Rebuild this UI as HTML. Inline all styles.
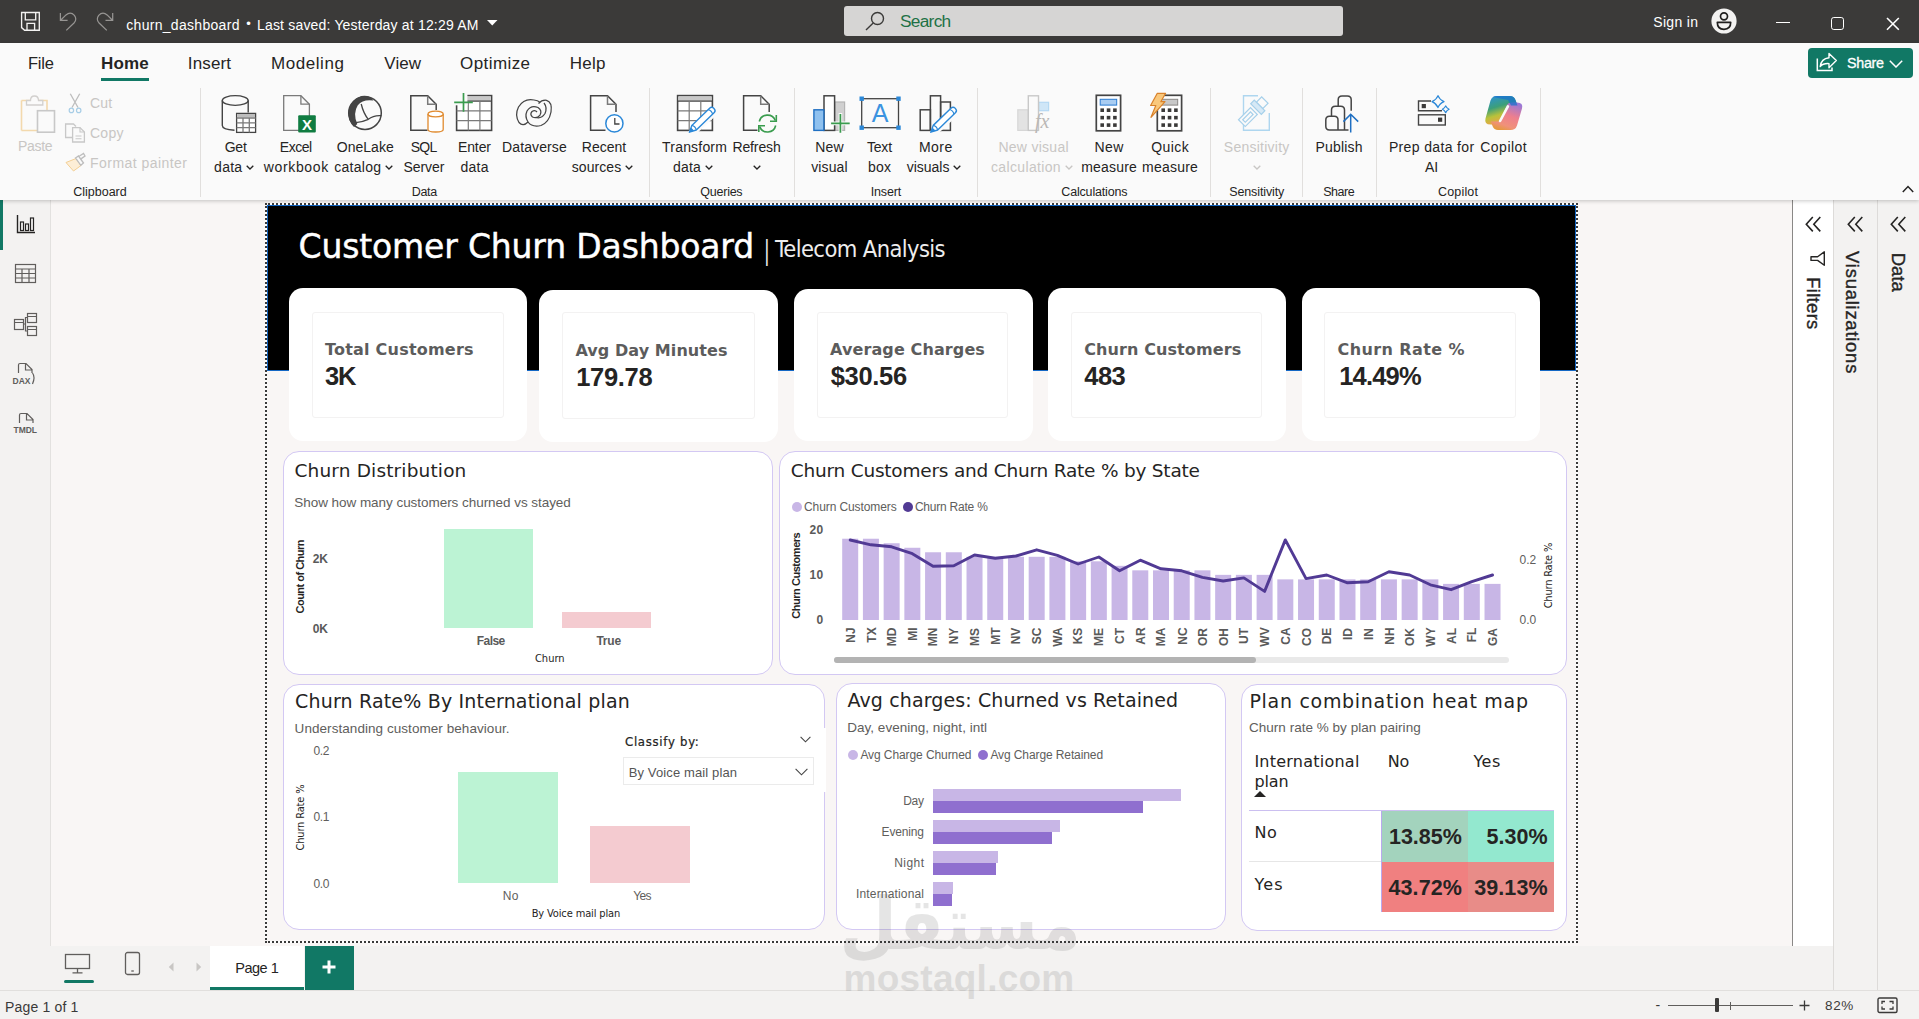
<!DOCTYPE html>
<html lang="en"><head><meta charset="utf-8"><title>churn_dashboard - Power BI Desktop</title>
<style>
html,body{margin:0;padding:0;}
body{width:1919px;height:1019px;overflow:hidden;position:relative;background:#f9f6f5;font-family:"Liberation Sans", sans-serif;}
.a{position:absolute;box-sizing:border-box;}
.t{position:absolute;white-space:pre;line-height:1;}
</style></head><body>
<div class="a" style="left:0px;top:200px;width:1919px;height:790px;background:#f9f6f5;"></div>
<div class="a" style="left:0px;top:200px;width:51px;height:790px;background:#f3f2f1;border-right:1px solid #e3e1df;"></div>
<div class="a" style="left:0px;top:200px;width:3px;height:50px;background:#117865;"></div>
<div class="a" style="left:1792px;top:200px;width:41px;height:746px;background:#ffffff;border-left:1px solid #8a8886;"></div>
<div class="a" style="left:1833px;top:200px;width:86px;height:790px;background:#f3f2f1;border-left:1px solid #dddbd9;"></div>
<div class="a" style="left:1877px;top:200px;width:1px;height:790px;background:#dddbd9;"></div>
<div class="a" style="left:50px;top:946px;width:1783px;height:44px;background:#f3f2f1;"></div>
<div class="a" style="left:0px;top:990px;width:1919px;height:29px;background:#f3f2f1;border-top:1px solid #e1dfdd;"></div>
<div class="a" style="left:0px;top:0px;width:1919px;height:43px;background:#3b3a39;"></div>
<div class="a" style="left:844px;top:6px;width:499px;height:30px;background:#d6d5d4;border-radius:3px;"></div>
<div class="a" style="left:0px;top:43px;width:1919px;height:157px;background:#fafafa;box-shadow:0 1px 4px rgba(0,0,0,.22);"></div>
<div class="a" style="left:101px;top:78px;width:48px;height:3px;background:#117865;"></div>
<div class="a" style="left:1807.5px;top:48px;width:105px;height:30px;background:#117865;border-radius:4px;"></div>
<div class="a" style="left:200px;top:88px;width:1px;height:109px;background:#e1dfdd;"></div>
<div class="a" style="left:649px;top:88px;width:1px;height:109px;background:#e1dfdd;"></div>
<div class="a" style="left:794px;top:88px;width:1px;height:109px;background:#e1dfdd;"></div>
<div class="a" style="left:977px;top:88px;width:1px;height:109px;background:#e1dfdd;"></div>
<div class="a" style="left:1210px;top:88px;width:1px;height:109px;background:#e1dfdd;"></div>
<div class="a" style="left:1302px;top:88px;width:1px;height:109px;background:#e1dfdd;"></div>
<div class="a" style="left:1376px;top:88px;width:1px;height:109px;background:#e1dfdd;"></div>
<div class="a" style="left:1540px;top:88px;width:1px;height:109px;background:#e1dfdd;"></div>
<svg class="a" style="left:246.375px;top:165.2px;" width="8" height="5" viewBox="0 0 8 5" fill="none"><path d="M0.7 0.7 L4 4 L7.3 0.7" stroke="#252423" stroke-width="1.3"/></svg>
<svg class="a" style="left:385.25px;top:165.2px;" width="8" height="5" viewBox="0 0 8 5" fill="none"><path d="M0.7 0.7 L4 4 L7.3 0.7" stroke="#252423" stroke-width="1.3"/></svg>
<svg class="a" style="left:625.25px;top:165.2px;" width="8" height="5" viewBox="0 0 8 5" fill="none"><path d="M0.7 0.7 L4 4 L7.3 0.7" stroke="#252423" stroke-width="1.3"/></svg>
<svg class="a" style="left:705.0px;top:165.2px;" width="8" height="5" viewBox="0 0 8 5" fill="none"><path d="M0.7 0.7 L4 4 L7.3 0.7" stroke="#252423" stroke-width="1.3"/></svg>
<svg class="a" style="left:753.1px;top:165.2px;" width="8" height="5" viewBox="0 0 8 5" fill="none"><path d="M0.7 0.7 L4 4 L7.3 0.7" stroke="#252423" stroke-width="1.3"/></svg>
<svg class="a" style="left:953.35px;top:165.2px;" width="8" height="5" viewBox="0 0 8 5" fill="none"><path d="M0.7 0.7 L4 4 L7.3 0.7" stroke="#252423" stroke-width="1.3"/></svg>
<svg class="a" style="left:1065.0px;top:165.2px;" width="8" height="5" viewBox="0 0 8 5" fill="none"><path d="M0.7 0.7 L4 4 L7.3 0.7" stroke="#c8c6c4" stroke-width="1.3"/></svg>
<svg class="a" style="left:1253.1px;top:165.2px;" width="8" height="5" viewBox="0 0 8 5" fill="none"><path d="M0.7 0.7 L4 4 L7.3 0.7" stroke="#c8c6c4" stroke-width="1.3"/></svg>
<div class="a" style="left:268px;top:203px;width:1310px;height:2px;background:repeating-linear-gradient(to right,#3a3a3a 0 2px,rgba(255,255,255,.9) 2px 4px);"></div>
<div class="a" style="left:268px;top:941px;width:1310px;height:2px;background:repeating-linear-gradient(to right,#3a3a3a 0 2px,rgba(255,255,255,.9) 2px 4px);"></div>
<div class="a" style="left:265px;top:206px;width:2px;height:734px;background:repeating-linear-gradient(to bottom,#3a3a3a 0 2px,rgba(255,255,255,.9) 2px 4px);"></div>
<div class="a" style="left:1576px;top:206px;width:2px;height:734px;background:repeating-linear-gradient(to bottom,#3a3a3a 0 2px,rgba(255,255,255,.9) 2px 4px);"></div>
<div class="a" style="left:265px;top:203px;width:2px;height:2px;background:#3a3a3a;"></div>
<div class="a" style="left:265px;top:941px;width:2px;height:2px;background:#3a3a3a;"></div>
<div class="a" style="left:267px;top:205px;width:1309px;height:166px;background:#000;border:1px solid #1467c4;"></div>
<div class="a" style="left:289px;top:288px;width:238px;height:153px;background:#fff;border-radius:14px;"></div>
<div class="a" style="left:312px;top:311.5px;width:191.5px;height:106px;border:1px solid #f3f2f2;border-radius:3px;"></div>
<div class="a" style="left:539px;top:290px;width:239px;height:152px;background:#fff;border-radius:14px;"></div>
<div class="a" style="left:562px;top:312px;width:192.5px;height:106.5px;border:1px solid #f3f2f2;border-radius:3px;"></div>
<div class="a" style="left:794px;top:289px;width:238.5px;height:152px;background:#fff;border-radius:14px;"></div>
<div class="a" style="left:816.75px;top:311.5px;width:191.5px;height:106px;border:1px solid #f3f2f2;border-radius:3px;"></div>
<div class="a" style="left:1048px;top:288px;width:238px;height:153px;background:#fff;border-radius:14px;"></div>
<div class="a" style="left:1070.75px;top:311.5px;width:191px;height:106px;border:1px solid #f3f2f2;border-radius:3px;"></div>
<div class="a" style="left:1302px;top:288px;width:238px;height:153px;background:#fff;border-radius:14px;"></div>
<div class="a" style="left:1324.25px;top:311.5px;width:191.25px;height:106px;border:1px solid #f3f2f2;border-radius:3px;"></div>
<div class="a" style="left:283px;top:451px;width:490px;height:224px;background:#fff;border:1px solid #d3c8f3;border-radius:16px;"></div>
<div class="a" style="left:444.25px;top:529.25px;width:89px;height:99px;background:#bcf3d4;"></div>
<div class="a" style="left:561.75px;top:611.75px;width:89px;height:16.5px;background:#f4cbd0;"></div>
<div class="a" style="left:779px;top:451px;width:788px;height:224px;background:#fff;border:1px solid #d3c8f3;border-radius:16px;"></div>
<div class="a" style="left:792px;top:502.3px;width:10px;height:10px;background:#c8b6e6;border-radius:50%;"></div>
<div class="a" style="left:903px;top:502.3px;width:10px;height:10px;background:#513a94;border-radius:50%;"></div>
<svg class="a" style="left:779px;top:451px;" width="788" height="224" viewBox="0 0 788 224" fill="none"><rect x="63.20" y="87.73" width="16" height="81.27" fill="#c8b6e6"/><rect x="83.92" y="87.73" width="16" height="81.27" fill="#c8b6e6"/><rect x="104.64" y="92.25" width="16" height="76.75" fill="#c8b6e6"/><rect x="125.36" y="96.76" width="16" height="72.24" fill="#c8b6e6"/><rect x="146.08" y="101.27" width="16" height="67.72" fill="#c8b6e6"/><rect x="166.80" y="101.27" width="16" height="67.72" fill="#c8b6e6"/><rect x="187.52" y="105.79" width="16" height="63.21" fill="#c8b6e6"/><rect x="208.24" y="105.79" width="16" height="63.21" fill="#c8b6e6"/><rect x="228.96" y="105.79" width="16" height="63.21" fill="#c8b6e6"/><rect x="249.68" y="105.79" width="16" height="63.21" fill="#c8b6e6"/><rect x="270.40" y="105.79" width="16" height="63.21" fill="#c8b6e6"/><rect x="291.12" y="110.31" width="16" height="58.69" fill="#c8b6e6"/><rect x="311.84" y="110.31" width="16" height="58.69" fill="#c8b6e6"/><rect x="332.56" y="114.82" width="16" height="54.18" fill="#c8b6e6"/><rect x="353.28" y="119.34" width="16" height="49.66" fill="#c8b6e6"/><rect x="374.00" y="119.34" width="16" height="49.66" fill="#c8b6e6"/><rect x="394.72" y="119.34" width="16" height="49.66" fill="#c8b6e6"/><rect x="415.44" y="119.34" width="16" height="49.66" fill="#c8b6e6"/><rect x="436.16" y="123.85" width="16" height="45.15" fill="#c8b6e6"/><rect x="456.88" y="123.85" width="16" height="45.15" fill="#c8b6e6"/><rect x="477.60" y="123.85" width="16" height="45.15" fill="#c8b6e6"/><rect x="498.32" y="128.37" width="16" height="40.63" fill="#c8b6e6"/><rect x="519.04" y="128.37" width="16" height="40.63" fill="#c8b6e6"/><rect x="539.76" y="128.37" width="16" height="40.63" fill="#c8b6e6"/><rect x="560.48" y="128.37" width="16" height="40.63" fill="#c8b6e6"/><rect x="581.20" y="128.37" width="16" height="40.63" fill="#c8b6e6"/><rect x="601.92" y="128.37" width="16" height="40.63" fill="#c8b6e6"/><rect x="622.64" y="128.37" width="16" height="40.63" fill="#c8b6e6"/><rect x="643.36" y="128.37" width="16" height="40.63" fill="#c8b6e6"/><rect x="664.08" y="132.88" width="16" height="36.12" fill="#c8b6e6"/><rect x="684.80" y="132.88" width="16" height="36.12" fill="#c8b6e6"/><rect x="705.52" y="132.88" width="16" height="36.12" fill="#c8b6e6"/><polyline points="71.20,89.00 91.92,93.80 112.64,95.80 133.36,102.70 154.08,115.30 174.80,114.70 195.52,104.00 216.24,107.20 236.96,105.00 257.68,98.80 278.40,104.30 299.12,113.00 319.84,106.00 340.56,119.80 361.28,109.20 382.00,117.80 402.72,119.80 423.44,126.40 444.16,130.00 464.88,126.90 485.60,140.40 506.32,88.90 527.04,127.60 547.76,124.00 568.48,131.80 589.20,130.80 609.92,120.80 630.64,124.00 651.36,133.80 672.08,138.70 692.80,130.60 713.52,124.00" stroke="#513a94" stroke-width="2.9" fill="none" stroke-linejoin="round" stroke-linecap="round"/></svg>
<div class="a" style="left:834.3px;top:656.5px;width:675px;height:6.5px;background:#e9e9e9;border-radius:3.5px;"></div>
<div class="a" style="left:834.3px;top:656.5px;width:421.6px;height:6.5px;background:#b3b3b3;border-radius:3.5px;"></div>
<div class="a" style="left:283px;top:684px;width:542px;height:246px;background:#fff;border:1px solid #d3c8f3;border-radius:16px;"></div>
<div class="a" style="left:458.1px;top:772px;width:99.8px;height:111.2px;background:#bcf3d4;"></div>
<div class="a" style="left:589.8px;top:825.7px;width:99.8px;height:57.5px;background:#f4cbd0;"></div>
<div class="a" style="left:618px;top:728px;width:208px;height:64px;background:#fff;"></div>
<svg class="a" style="left:799.5px;top:736px;" width="11" height="7" viewBox="0 0 11 7" fill="none"><path d="M0.6 0.8 L5.5 5.8 L10.4 0.8" stroke="#444" stroke-width="1.1"/></svg>
<div class="a" style="left:622.5px;top:757px;width:191.5px;height:27.5px;background:#fff;border:1px solid #ebebeb;"></div>
<svg class="a" style="left:795px;top:768px;" width="13" height="8" viewBox="0 0 13 8" fill="none"><path d="M0.6 0.8 L6.5 6.8 L12.4 0.8" stroke="#444" stroke-width="1.1"/></svg>
<div class="a" style="left:836px;top:682.5px;width:390px;height:247.5px;background:#fff;border:1px solid #d3c8f3;border-radius:16px;"></div>
<div class="a" style="left:848px;top:749.7px;width:10px;height:10px;background:#c8b6e6;border-radius:50%;"></div>
<div class="a" style="left:978px;top:749.7px;width:10px;height:10px;background:#8f6fcf;border-radius:50%;"></div>
<div class="a" style="left:933px;top:789px;width:248px;height:12px;background:#c8b6e6;"></div>
<div class="a" style="left:933px;top:801px;width:209.70000000000005px;height:11.6px;background:#8f6fcf;"></div>
<div class="a" style="left:933px;top:820px;width:127px;height:12px;background:#c8b6e6;"></div>
<div class="a" style="left:933px;top:832px;width:119px;height:11.6px;background:#8f6fcf;"></div>
<div class="a" style="left:933px;top:851px;width:64.79999999999995px;height:12px;background:#c8b6e6;"></div>
<div class="a" style="left:933px;top:863px;width:63.200000000000045px;height:11.6px;background:#8f6fcf;"></div>
<div class="a" style="left:933px;top:882px;width:20.299999999999955px;height:12px;background:#c8b6e6;"></div>
<div class="a" style="left:933px;top:894px;width:19.200000000000045px;height:11.6px;background:#8f6fcf;"></div>
<div class="a" style="left:1241px;top:683.5px;width:326px;height:247.5px;background:#fff;border:1px solid #d3c8f3;border-radius:16px;"></div>
<svg class="a" style="left:1254px;top:790.8px;" width="12" height="6" viewBox="0 0 12 6" fill="none"><path d="M0 6 L6 0 L12 6 Z" fill="#252423"/></svg>
<div class="a" style="left:1249px;top:810px;width:305px;height:1px;background:#cbbff0;"></div>
<div class="a" style="left:1249px;top:861px;width:133px;height:1px;background:#e6e6e6;"></div>
<div class="a" style="left:1381.6px;top:811px;width:86.4px;height:50.5px;background:#a3d3bd;"></div>
<div class="a" style="left:1468px;top:811px;width:86px;height:50.5px;background:#93e8cf;"></div>
<div class="a" style="left:1381.6px;top:861.5px;width:86.4px;height:50.5px;background:#f08080;"></div>
<div class="a" style="left:1468px;top:861.5px;width:86px;height:50.5px;background:#e88c88;"></div>
<div class="a" style="left:1381px;top:811px;width:1px;height:101px;background:#b9a9ee;"></div>
<svg class="a" style="left:64px;top:953px;" width="28" height="22" viewBox="0 0 28 22" fill="none"><rect x="1.5" y="1.5" width="24" height="14" stroke="#605e5c" stroke-width="1.3"/><path d="M13.5 15.5 V19.5 M8.5 19.8 H18.5" stroke="#605e5c" stroke-width="1.3"/></svg>
<div class="a" style="left:64px;top:980px;width:29.5px;height:3px;background:#117865;border-radius:1.5px;"></div>
<svg class="a" style="left:124px;top:951px;" width="18" height="26" viewBox="0 0 18 26" fill="none"><rect x="1.5" y="1.5" width="14" height="22" rx="2" stroke="#605e5c" stroke-width="1.3"/><path d="M7.3 20 H9.8" stroke="#605e5c" stroke-width="1.3"/></svg>
<svg class="a" style="left:168px;top:962px;" width="6" height="10" viewBox="0 0 6 10" fill="none"><path d="M5.5 0.5 L0.8 5 L5.5 9.5 Z" fill="#c8c6c4"/></svg>
<svg class="a" style="left:196px;top:962px;" width="6" height="10" viewBox="0 0 6 10" fill="none"><path d="M0.5 0.5 L5.2 5 L0.5 9.5 Z" fill="#c8c6c4"/></svg>
<div class="a" style="left:210px;top:946px;width:94px;height:43.5px;background:#fff;border-bottom:3.5px solid #117865;"></div>
<div class="a" style="left:305px;top:946px;width:48.5px;height:43.5px;background:#117865;"></div>
<svg class="a" style="left:321px;top:959px;" width="16" height="16" viewBox="0 0 16 16" fill="none"><path d="M8 1.5 V14.5 M1.5 8 H14.5" stroke="#fff" stroke-width="3"/></svg>
<div class="a" style="left:1667.5px;top:1005px;width:125px;height:1px;background:#605e5c;"></div>
<div class="a" style="left:1714.5px;top:998px;width:4px;height:14px;background:#3b3a39;border-radius:1px;"></div>
<div class="a" style="left:1729.5px;top:1001.5px;width:1px;height:8px;background:#605e5c;"></div>
<svg class="a" style="left:1798.5px;top:1000px;" width="11" height="11" viewBox="0 0 11 11" fill="none"><path d="M5.5 0.5 V10.5 M0.5 5.5 H10.5" stroke="#3b3a39" stroke-width="1.3"/></svg>
<svg class="a" style="left:1877px;top:997px;" width="22" height="17" viewBox="0 0 22 17" fill="none"><rect x="1" y="1" width="19" height="14.5" rx="1.5" stroke="#3b3a39" stroke-width="1.4"/><path d="M5 7 V4.5 H8 M12.5 4.5 H16 V7 M16 9.5 V12 H12.5 M8 12 H5 V9.5" stroke="#3b3a39" stroke-width="1.3"/></svg>
<svg class="a" style="left:1805px;top:215.5px;" width="17" height="17" viewBox="0 0 17 17" fill="none"><path d="M7.8 1 L1.3 8.2 L7.8 15.4 M15.3 1 L8.8 8.2 L15.3 15.4" stroke="#252423" stroke-width="1.6"/></svg>
<svg class="a" style="left:1847px;top:215.5px;" width="17" height="17" viewBox="0 0 17 17" fill="none"><path d="M7.8 1 L1.3 8.2 L7.8 15.4 M15.3 1 L8.8 8.2 L15.3 15.4" stroke="#252423" stroke-width="1.6"/></svg>
<svg class="a" style="left:1890px;top:215.5px;" width="17" height="17" viewBox="0 0 17 17" fill="none"><path d="M7.8 1 L1.3 8.2 L7.8 15.4 M15.3 1 L8.8 8.2 L15.3 15.4" stroke="#252423" stroke-width="1.6"/></svg>
<svg class="a" style="left:1809px;top:250px;" width="17" height="17" viewBox="0 0 17 17" fill="none"><path d="M15.3 1.8 V15.2 L8.6 10.4 H2 V6.8 H8.6 Z" stroke="#252423" stroke-width="1.4" stroke-linejoin="round"/></svg>
<svg class="a" style="left:15px;top:213.3px;" width="22" height="22" viewBox="0 0 22 22" fill="none"><path d="M2.5 2 V19.5 H20" stroke="#252423" stroke-width="1.4"/><rect x="5.5" y="9" width="3" height="8.5" stroke="#252423" stroke-width="1.2"/><rect x="10.5" y="11" width="3" height="6.5" stroke="#252423" stroke-width="1.2"/><rect x="15.5" y="5" width="3" height="12.5" stroke="#252423" stroke-width="1.2"/></svg>
<svg class="a" style="left:14px;top:263px;" width="24" height="22" viewBox="0 0 24 22" fill="none"><rect x="1.5" y="1.5" width="20" height="18" stroke="#605e5c" stroke-width="1.2"/><path d="M1.5 6 H21.5 M1.5 10.5 H21.5 M1.5 15 H21.5 M8 6 V19.5 M15 6 V19.5" stroke="#605e5c" stroke-width="1.2"/></svg>
<svg class="a" style="left:13px;top:312px;" width="26" height="26" viewBox="0 0 26 26" fill="none"><rect x="1.5" y="7.5" width="9" height="10" stroke="#605e5c" stroke-width="1.2"/><rect x="14.5" y="1.5" width="9" height="9" stroke="#605e5c" stroke-width="1.2"/><rect x="14.5" y="14.5" width="9" height="9" stroke="#605e5c" stroke-width="1.2"/><path d="M1.5 10.5 H10.5 M14.5 4.5 H23.5 M14.5 17.5 H23.5 M10.5 12 H12.5 V5.5 H14.5 M12.5 12 V19 H14.5" stroke="#605e5c" stroke-width="1.2"/></svg>
<svg class="a" style="left:13px;top:362px;" width="26" height="26" viewBox="0 0 26 26" fill="none"><path d="M5.5 11 V3 Q5.5 1.5 7 1.5 H13 L19 7.5 V11 M12.5 1.5 V8 H19 M19.5 11 Q22.5 15 19.5 22" stroke="#605e5c" stroke-width="1.2"/></svg>
<svg class="a" style="left:13px;top:412px;" width="26" height="26" viewBox="0 0 26 26" fill="none"><path d="M6.5 11 V3 Q6.5 1.5 8 1.5 H14 L20 7.5 V11 M13.5 1.5 V8 H20" stroke="#605e5c" stroke-width="1.2"/></svg>
<svg class="a" style="left:18px;top:9px;" width="26" height="25" viewBox="18 9 26 25" fill="none"><path d="M21.6 12.5 H39.3 V30.2 H24.6 L21.6 27.6 Z M25.3 12.5 V19.8 H35.7 V12.5 M27 30.2 V23.3 H34.6 V30.2" stroke="#f3f2f1" stroke-width="1.35" stroke-linejoin="miter"/></svg>
<svg class="a" style="left:56px;top:9px;" width="24" height="25" viewBox="56 9 24 25" fill="none"><path d="M60.4 13 V20.4 H67.6 M60.6 20.2 L66 14.9 Q70.5 11.3 74.4 15.4 Q77.4 19.5 74 23 L66.3 30.4" stroke="#979593" stroke-width="1.25"/></svg>
<svg class="a" style="left:93px;top:9px;" width="24" height="25" viewBox="93 9 24 25" fill="none"><path d="M112.7 13 V20.4 H105.5 M112.5 20.2 L107.1 14.9 Q102.6 11.3 98.7 15.4 Q95.7 19.5 99.1 23 L106.8 30.4" stroke="#979593" stroke-width="1.25"/></svg>
<svg class="a" style="left:487px;top:20px;" width="11" height="6" viewBox="0 0 11 6" fill="none"><path d="M0 0 H10.5 L5.25 5.5 Z" fill="#fff"/></svg>
<svg class="a" style="left:865px;top:11px;" width="21" height="20" viewBox="0 0 21 20" fill="none"><circle cx="12.5" cy="7.5" r="6" stroke="#3b3a39" stroke-width="1.4"/><path d="M8.2 12 L1 19" stroke="#3b3a39" stroke-width="1.4"/></svg>
<svg class="a" style="left:1710.6px;top:8.4px;" width="26" height="26" viewBox="0 0 26 26" fill="none"><circle cx="13" cy="13" r="12.6" fill="#f3f2f1"/><circle cx="13" cy="8.3" r="3.5" stroke="#201f1e" stroke-width="1.7"/><path d="M6.3 14.3 H19.7 Q19.7 21.3 13 21.3 Q6.3 21.3 6.3 14.3 Z" stroke="#201f1e" stroke-width="1.7" stroke-linejoin="round"/></svg>
<div class="a" style="left:1776px;top:21.6px;width:13.5px;height:1.5px;background:#fff;"></div>
<div class="a" style="left:1830.8px;top:16.8px;width:13.4px;height:12.8px;border:1.5px solid #fff;border-radius:2.8px;"></div>
<svg class="a" style="left:1886px;top:16.5px;" width="14" height="14" viewBox="0 0 14 14" fill="none"><path d="M1 1 L12.8 12.8 M12.8 1 L1 12.8" stroke="#fff" stroke-width="1.6"/></svg>
<svg class="a" style="left:1814px;top:50px;" width="26" height="24" viewBox="1814 50 26 24" fill="none"><path d="M1817.3 58.4 V70.4 H1832 V67.6" stroke="#fff" stroke-width="1.5"/><path d="M1829 53.4 L1836.3 60.6 L1829 67.8 V63.6 Q1823 63.2 1820.2 66.6 Q1821.2 58.6 1829 57.8 Z" stroke="#fff" stroke-width="1.4" stroke-linejoin="round"/></svg>
<svg class="a" style="left:1888.5px;top:59.5px;" width="14" height="8" viewBox="0 0 14 8" fill="none"><path d="M0.8 0.8 L7 7 L13.2 0.8" stroke="#fff" stroke-width="1.5"/></svg>
<svg class="a" style="left:1902px;top:185px;" width="12" height="8" viewBox="0 0 12 8" fill="none"><path d="M0.8 7 L6 1.5 L11.2 7" stroke="#252423" stroke-width="1.5"/></svg>
<svg class="a" style="left:0;top:88px" width="1919" height="90" viewBox="0 88 1919 90" fill="none"><rect x="21.5" y="100.5" width="25.5" height="30" stroke="#f3d9ad" stroke-width="1.6" stroke-dasharray="1 0"/><path d="M26.5 105 V100.5 H30.5 Q30.5 96 34.5 96 Q38.5 96 38.5 100.5 H42.8 V105 Z" fill="#fafafa" stroke="#d2d0ce" stroke-width="1.3"/><rect x="37.5" y="110.7" width="17" height="21.5" fill="#fafafa" stroke="#c8c8c8" stroke-width="1.6"/><path d="M70.3 93.8 L78 107.5 M79.7 93.8 L72 107.5" stroke="#bdbdbd" stroke-width="1.3"/><circle cx="71.4" cy="110.4" r="2.2" stroke="#a7cde6" stroke-width="1.2"/><circle cx="78.7" cy="110.4" r="2.2" stroke="#a7cde6" stroke-width="1.2"/><path d="M72 137.5 H65.6 V124 H73.5 L76 126.5" stroke="#c8c8c8" stroke-width="1.3"/><path d="M72.6 127.6 H80 L84.4 132 V142 H72.6 Z" stroke="#c8c8c8" stroke-width="1.3" fill="#fafafa"/><path d="M80 127.6 V132 H84.4 M75.5 136 H81.5 M75.5 138.7 H81.5" stroke="#c8c8c8" stroke-width="1.1"/><path d="M66 162.5 L76 158.5 L81 165.5 L73.5 171 Z" fill="#fdeed6" stroke="#f3cf94" stroke-width="1"/><path d="M75.5 158 L78.5 156 L83.5 163 L80.8 165.3 Z M79.5 156 L83.5 153.5 L85 156 L81.3 158.6" stroke="#bdbdbd" stroke-width="1.3" fill="#fafafa"/><path d="M222.3 100.5 V125.5 Q222.3 129.5 234.5 130.3 M248.2 100.5 V112.5" stroke="#444444" stroke-width="1.4"/><ellipse cx="235.25" cy="100.5" rx="12.95" ry="4.9" stroke="#444444" stroke-width="1.4"/><rect x="236.6" y="113.4" width="19" height="19" fill="#fff" stroke="#444444" stroke-width="1.3"/><rect x="237.2" y="114" width="17.8" height="3.2" fill="#bdbdbd"/><path d="M236.6 118 H255.6 M236.6 122.8 H255.6 M236.6 127.6 H255.6 M243 118 V132.4 M249.3 118 V132.4" stroke="#7a7a7a" stroke-width="1.3"/><path d="M309.4 104.2 L300.9 95.7 H283.7 V130.3 H309.4 Z" stroke="#7a7a7a" stroke-width="1.3" stroke-linejoin="miter"/><path d="M300.9 95.7 V104.2 H309.4" stroke="#7a7a7a" stroke-width="1.3"/><rect x="298.2" y="115.2" width="17.6" height="17.4" rx="1" fill="#107c41"/><circle cx="365" cy="113.1" r="16.3" stroke="#444444" stroke-width="1.5"/><path d="M373.5 100.6 Q369.5 94.6 361.5 96 Q351.5 99 348.8 110 Q347.3 120.5 354 127 L357.3 124 Q352.6 113.5 357.8 105.3 Q363 99 373.5 100.6 Z" fill="#444444"/><path d="M361.2 104 Q363.5 113.5 368.3 119.3 M355.8 122.6 Q362.5 122 368.3 119.3 Q373.5 115 381.3 115.6" stroke="#444444" stroke-width="1.3"/><path d="M436.2 110 V104.2 L427.7 95.7 H410.8 V130.3 H427.5" stroke="#444444" stroke-width="1.5" stroke-linejoin="miter"/><path d="M427.7 95.7 V104.2 H436.2" stroke="#7a7a7a" stroke-width="1.5"/><path d="M428 114 V129.5 Q428 132 435.6 132 Q443.2 132 443.2 129.5 V114" fill="#fff" stroke="#e08a2e" stroke-width="1.3"/><ellipse cx="435.6" cy="114" rx="7.6" ry="2.9" fill="#fff" stroke="#e08a2e" stroke-width="1.3"/><rect x="456.6" y="95.6" width="35" height="34.8" stroke="#444444" stroke-width="1.6" fill="#fff"/><rect x="457.40000000000003" y="96.39999999999999" width="33.4" height="4.6" fill="#c8c8c8"/><path d="M456.6 101.19999999999999 H491.6" stroke="#444444" stroke-width="1.3"/><path d="M456.6 110.9 H491.6 M456.6 120.7 H491.6 M468.3 101.19999999999999 V130.39999999999998 M479.9 101.19999999999999 V130.39999999999998" stroke="#7a7a7a" stroke-width="1.2"/><rect x="453" y="93" width="14.4" height="12.3" fill="#fafafa"/><path d="M456.6 106 V112.5 M470 95.6 H476" stroke="#444444" stroke-width="0"/><path d="M463.5 93.10000000000001 V111.7 M454.2 102.4 H472.8" stroke="#3a9c4e" stroke-width="1.7"/><path d="M534 100 Q524 98 518.5 107 Q514.5 115 519 122.5 Q523 127 528 122 Q524.5 116.5 527 111 Q531 104.5 538 107.5 Q542.5 110.5 540 115 Q537 119 532.5 117 Q529.5 114.5 532 111.5 Q535 109.5 537 112" stroke="#444444" stroke-width="1.25"/><path d="M528 122 Q532 127.5 541 125.5 Q549 122.5 551 112 Q552.5 102 546.5 100.3 Q542 99.7 538.5 103.5 M534 100 Q537.5 100.3 540.5 102.5 M536 117.5 Q541.5 119 545 113.5 Q547.5 107.5 544 103" stroke="#444444" stroke-width="1.25"/><path d="M616 112 V104.2 L607.5 95.7 H590.6 V130.3 H605.5" stroke="#444444" stroke-width="1.5" stroke-linejoin="miter"/><path d="M607.5 95.7 V104.2 H616.0" stroke="#7a7a7a" stroke-width="1.5"/><circle cx="614.4" cy="123.4" r="8.6" fill="#fff" stroke="#2b88d8" stroke-width="1.5"/><path d="M614.8 118 V124 H619.5" stroke="#444444" stroke-width="1.3"/><rect x="677.6" y="95.6" width="34.8" height="34.8" stroke="#444444" stroke-width="1.6" fill="#fff"/><rect x="678.4" y="96.39999999999999" width="33.199999999999996" height="4.6" fill="#c8c8c8"/><path d="M677.6 101.19999999999999 H712.4" stroke="#444444" stroke-width="1.3"/><path d="M677.6 110.9 H712.4 M677.6 120.7 H712.4 M689.2 101.19999999999999 V130.39999999999998 M700.8 101.19999999999999 V130.39999999999998" stroke="#7a7a7a" stroke-width="1.2"/><path d="M686 134 L716 104 L722 110 L694 136 Z" fill="#fafafa"/><g transform="translate(689.4 132.2) rotate(-44.05)"><path d="M0 0 L6.5 -3.2 H31.2 Q34.2 -3.2 34.2 0 Q34.2 3.2 31.2 3.2 H6.5 Z" fill="#fff" stroke="#2b88d8" stroke-width="1.4" stroke-linejoin="round"/><path d="M0 0 L4.5 -2.2 V2.2 Z" fill="#2b88d8"/><path d="M6.5 -3.2 Q8.5 0 6.5 3.2" stroke="#2b88d8" stroke-width="1.1"/><path d="M29.2 -3.2 Q31.2 0 29.2 3.2" stroke="#2b88d8" stroke-width="1.1"/></g><path d="M769.2 112 V104.2 L760.7 95.7 H743.6 V130.3 H757.5" stroke="#444444" stroke-width="1.5" stroke-linejoin="miter"/><path d="M760.7 95.7 V104.2 H769.2" stroke="#7a7a7a" stroke-width="1.5"/><path d="M759.3 121.5 A8.4 8.4 0 0 1 775.3 120.5 M775.7 125.5 A8.4 8.4 0 0 1 759.7 126.6" stroke="#3a9c4e" stroke-width="1.6"/><path d="M776.3 115 V121.3 H770 M758.8 132 V125.8 H765" stroke="#3a9c4e" stroke-width="1.6"/><rect x="834.8" y="102" width="9.8" height="28.4" fill="#d0d0d0" stroke="#b4b4b4" stroke-width="1.2"/><rect x="824" y="95.8" width="10.6" height="34.6" fill="#fff" stroke="#444444" stroke-width="1.5"/><rect x="813.9" y="109.8" width="10" height="20.6" fill="#8fc1ef" stroke="#1f6fc2" stroke-width="1.4"/><path d="M840.4 113.10000000000001 V133.70000000000002 M830.1 123.4 H850.6999999999999" stroke="#fafafa" stroke-width="3.6"/><path d="M840.4 114.10000000000001 V132.70000000000002 M831.1 123.4 H849.6999999999999" stroke="#3a9c4e" stroke-width="1.7"/><rect x="861.7" y="98.7" width="36.8" height="29" stroke="#444444" stroke-width="1.3"/><rect x="859.5" y="96.5" width="4.4" height="4.4" fill="#2b88d8"/><rect x="896.3" y="96.5" width="4.4" height="4.4" fill="#2b88d8"/><rect x="859.5" y="125.5" width="4.4" height="4.4" fill="#2b88d8"/><rect x="896.3" y="125.5" width="4.4" height="4.4" fill="#2b88d8"/><rect x="920.2" y="109.8" width="10.2" height="20.6" stroke="#444444" stroke-width="1.5"/><rect x="930.4" y="95.8" width="10.2" height="34.6" stroke="#444444" stroke-width="1.5"/><rect x="940.6" y="102" width="9.8" height="28.4" stroke="#444444" stroke-width="1.5"/><path d="M927.5 134 L957 104.5 L963 110.5 L935.5 136 Z" fill="#fafafa"/><g transform="translate(930.8 132.2) rotate(-44.17)"><path d="M0 0 L6.5 -3.2 H31.2 Q34.2 -3.2 34.2 0 Q34.2 3.2 31.2 3.2 H6.5 Z" fill="#fff" stroke="#2b88d8" stroke-width="1.4" stroke-linejoin="round"/><path d="M0 0 L4.5 -2.2 V2.2 Z" fill="#2b88d8"/><path d="M6.5 -3.2 Q8.5 0 6.5 3.2" stroke="#2b88d8" stroke-width="1.1"/><path d="M29.2 -3.2 Q31.2 0 29.2 3.2" stroke="#2b88d8" stroke-width="1.1"/></g><rect x="1038.6" y="102.3" width="10" height="8.4" fill="#cfe6f7" stroke="#b5d9f3" stroke-width="1.2"/><rect x="1017.8" y="109.8" width="10.4" height="20.6" fill="#e3e3e3" stroke="#d6d6d6" stroke-width="1.2"/><rect x="1028.3" y="95.8" width="10.2" height="34.6" fill="#fafafa" stroke="#c8c8c8" stroke-width="1.4"/><rect x="1096.3" y="95.3" width="24.3" height="35.5" stroke="#444444" stroke-width="1.7" fill="#fff"/><rect x="1100.2" y="99.3" width="16.5" height="5.8" fill="#a9cdf2" stroke="#2b7cd3" stroke-width="1"/><rect x="1100.40" y="108.40" width="3.6" height="3.6" fill="#3b3a39"/><rect x="1106.75" y="108.40" width="3.6" height="3.6" fill="#3b3a39"/><rect x="1113.10" y="108.40" width="3.6" height="3.6" fill="#3b3a39"/><rect x="1100.40" y="115.85" width="3.6" height="3.6" fill="#3b3a39"/><rect x="1106.75" y="115.85" width="3.6" height="3.6" fill="#3b3a39"/><rect x="1113.10" y="115.85" width="3.6" height="3.6" fill="#3b3a39"/><rect x="1100.40" y="123.30" width="3.6" height="3.6" fill="#3b3a39"/><rect x="1106.75" y="123.30" width="3.6" height="3.6" fill="#3b3a39"/><rect x="1113.10" y="123.30" width="3.6" height="3.6" fill="#3b3a39"/><rect x="1157.3" y="95.3" width="24.3" height="35.5" stroke="#444444" stroke-width="1.7" fill="#fff"/><rect x="1161.2" y="99.3" width="16.5" height="5.8" fill="#c8c8c8" stroke="#8a8886" stroke-width="1"/><rect x="1161.40" y="108.40" width="3.6" height="3.6" fill="#3b3a39"/><rect x="1167.75" y="108.40" width="3.6" height="3.6" fill="#3b3a39"/><rect x="1174.10" y="108.40" width="3.6" height="3.6" fill="#3b3a39"/><rect x="1161.40" y="115.85" width="3.6" height="3.6" fill="#3b3a39"/><rect x="1167.75" y="115.85" width="3.6" height="3.6" fill="#3b3a39"/><rect x="1174.10" y="115.85" width="3.6" height="3.6" fill="#3b3a39"/><rect x="1161.40" y="123.30" width="3.6" height="3.6" fill="#3b3a39"/><rect x="1167.75" y="123.30" width="3.6" height="3.6" fill="#3b3a39"/><rect x="1174.10" y="123.30" width="3.6" height="3.6" fill="#3b3a39"/><path d="M1149 92 H1168 V119 H1149 Z" fill="#fafafa" opacity="0"/><path d="M1157.3 93.3 H1165.6 L1160.8 101.7 H1165 L1151 117.3 L1155.8 105.5 H1150.6 Z" fill="#f9c87c" stroke="#d9822b" stroke-width="1.2" stroke-linejoin="round"/><path d="M1258 95.8 H1243.5 V130.3 H1269.3 V113" stroke="#aed6ef" stroke-width="1.4"/><g transform="translate(1258.5 106.5) rotate(45)" stroke="#a6d0ea" stroke-width="1.2"><rect x="-4.5" y="-9" width="9" height="7.5" fill="#fafafa"/><rect x="-7.5" y="-1.5" width="15" height="5" fill="#d6e9f6"/><rect x="-4.8" y="6.5" width="9.6" height="17" fill="#fafafa"/><rect x="-1.8" y="9.5" width="3.6" height="11" /></g><path d="M1338.2 107 V99.8 Q1338.2 96 1342 96 H1347.3 Q1351.2 96 1351.2 99.8 V110.8" stroke="#444444" stroke-width="1.5"/><path d="M1331.5 116 V110 Q1331.5 106.2 1335.3 106.2 H1340.7 Q1344.5 106.2 1344.5 110 V130" stroke="#444444" stroke-width="1.5"/><path d="M1348.5 130 H1329.5 Q1325.8 130 1325.8 126.3 V120 Q1325.8 116.2 1329.5 116.2 H1334.3 Q1338 116.2 1338 120 V130" stroke="#444444" stroke-width="1.5"/><path d="M1350.7 132.5 V114 M1343.4 121.6 L1350.7 114.2 L1358.2 121.6" stroke="#1f6fc2" stroke-width="1.5"/><path d="M1431 101 H1418.5 V110.8 H1442" stroke="#444444" stroke-width="1.4"/><rect x="1418.5" y="114.8" width="26.8" height="10.2" stroke="#444444" stroke-width="1.4"/><rect x="1421.7" y="104" width="4.2" height="4.2" fill="#3b3a39"/><rect x="1438" y="117.6" width="4.2" height="4.2" fill="#3b3a39"/><path d="M1438 95.6 Q1439.68 99.91999999999999 1444 101.6 Q1439.68 103.28 1438 107.6 Q1436.32 103.28 1432 101.6 Q1436.32 99.91999999999999 1438 95.6 Z" fill="#fafafa" stroke="#2b88d8" stroke-width="1.2" stroke-linejoin="round"/><path d="M1445.7 105.89999999999999 Q1446.652 108.348 1449.1000000000001 109.3 Q1446.652 110.252 1445.7 112.7 Q1444.748 110.252 1442.3 109.3 Q1444.748 108.348 1445.7 105.89999999999999 Z" fill="#fafafa" stroke="#2b88d8" stroke-width="1.2" stroke-linejoin="round"/><defs><linearGradient id="cpa" x1="0" y1="0" x2="0.35" y2="1"><stop offset="0" stop-color="#2a8fe0"/><stop offset="0.45" stop-color="#3c9f7a"/><stop offset="0.72" stop-color="#b9c23a"/><stop offset="1" stop-color="#f0a24a"/></linearGradient><linearGradient id="cpb" x1="0.7" y1="0" x2="0.3" y2="1"><stop offset="0" stop-color="#9a78d6"/><stop offset="0.45" stop-color="#ee7f8e"/><stop offset="0.8" stop-color="#f0917a"/><stop offset="1" stop-color="#e59a3c"/></linearGradient></defs><path d="M1493 97 Q1494.5 96 1497 96 H1510 Q1514 96 1515.5 100 L1517.5 105.5 H1511 Q1506.5 105.5 1505 110 L1501 122 Q1500 124.5 1497 124.5 H1490.5 Q1484 124.5 1485.5 118.5 L1490.5 100.5 Q1491.3 98 1493 97 Z" fill="url(#cpa)"/><path d="M1514.5 129 Q1513 130 1510.5 130 H1498 Q1494 130 1492.5 126 L1490.8 121.5 H1497 Q1501.5 121.5 1503 117 L1507 105 Q1508 102.5 1511 102.5 H1517 Q1523.5 102.5 1522 108.5 L1517 125.5 Q1516.2 128 1514.5 129 Z" fill="url(#cpb)"/><path d="M1493 97 Q1494.5 96 1497 96 H1510 Q1514 96 1515.5 100 L1517.5 105.5 H1511 L1508 100 Z" fill="#1a73c9" opacity=".75"/><path d="M1507.9 106.3 L1500.1 121" stroke="#fafafa" stroke-width="2.6" stroke-linecap="round"/></svg>
<span class="t" style="left:126.25px;top:18.15px;font-family:&quot;Liberation Sans&quot;, sans-serif;font-size:14px;font-weight:400;color:#fff;letter-spacing:0.301px;">churn_dashboard</span>
<span class="t" style="left:246.30px;top:17.20px;font-family:&quot;Liberation Sans&quot;, sans-serif;font-size:13px;font-weight:400;color:#fff;">•</span>
<span class="t" style="left:257.00px;top:18.15px;font-family:&quot;Liberation Sans&quot;, sans-serif;font-size:14px;font-weight:400;color:#fff;letter-spacing:0.179px;">Last saved: Yesterday at 12:29 AM</span>
<span class="t" style="left:900.00px;top:13.16px;font-family:&quot;Liberation Sans&quot;, sans-serif;font-size:17.3px;font-weight:400;color:#1e7145;letter-spacing:-0.711px;">Search</span>
<span class="t" style="left:1653.25px;top:15.15px;font-family:&quot;Liberation Sans&quot;, sans-serif;font-size:14px;font-weight:400;color:#fff;letter-spacing:0.312px;">Sign in</span>
<span class="t" style="left:28.00px;top:55.33px;font-family:&quot;Liberation Sans&quot;, sans-serif;font-size:16.5px;font-weight:400;color:#252423;letter-spacing:-0.211px;">File</span>
<span class="t" style="left:101.00px;top:54.91px;font-family:&quot;Liberation Sans&quot;, sans-serif;font-size:17px;font-weight:700;color:#252423;letter-spacing:0.129px;">Home</span>
<span class="t" style="left:187.75px;top:54.91px;font-family:&quot;Liberation Sans&quot;, sans-serif;font-size:17px;font-weight:400;color:#252423;letter-spacing:0.161px;">Insert</span>
<span class="t" style="left:271.00px;top:54.91px;font-family:&quot;Liberation Sans&quot;, sans-serif;font-size:17px;font-weight:400;color:#252423;letter-spacing:0.562px;">Modeling</span>
<span class="t" style="left:384.25px;top:54.91px;font-family:&quot;Liberation Sans&quot;, sans-serif;font-size:17px;font-weight:400;color:#252423;letter-spacing:0.113px;">View</span>
<span class="t" style="left:460.00px;top:54.91px;font-family:&quot;Liberation Sans&quot;, sans-serif;font-size:17px;font-weight:400;color:#252423;letter-spacing:0.428px;">Optimize</span>
<span class="t" style="left:569.75px;top:54.91px;font-family:&quot;Liberation Sans&quot;, sans-serif;font-size:17px;font-weight:400;color:#252423;letter-spacing:0.258px;">Help</span>
<span class="t" style="left:1847.00px;top:55.90px;font-family:&quot;Liberation Sans&quot;, sans-serif;font-size:14.3px;font-weight:400;color:#fff;letter-spacing:-0.281px;-webkit-text-stroke:0.3px #fff;">Share</span>
<span class="t" style="left:18.00px;top:139.45px;font-family:&quot;Liberation Sans&quot;, sans-serif;font-size:14px;font-weight:400;color:#c8c6c4;letter-spacing:-0.322px;">Paste</span>
<span class="t" style="left:90.00px;top:95.65px;font-family:&quot;Liberation Sans&quot;, sans-serif;font-size:14px;font-weight:400;color:#c8c6c4;letter-spacing:0.234px;">Cut</span>
<span class="t" style="left:90.00px;top:125.65px;font-family:&quot;Liberation Sans&quot;, sans-serif;font-size:14px;font-weight:400;color:#c8c6c4;letter-spacing:0.253px;">Copy</span>
<span class="t" style="left:90.00px;top:155.65px;font-family:&quot;Liberation Sans&quot;, sans-serif;font-size:14px;font-weight:400;color:#c8c6c4;letter-spacing:0.461px;">Format painter</span>
<span class="t" style="left:224.65px;top:139.65px;font-family:&quot;Liberation Sans&quot;, sans-serif;font-size:14px;font-weight:400;color:#252423;letter-spacing:-0.193px;">Get</span>
<span class="t" style="left:214.12px;top:159.65px;font-family:&quot;Liberation Sans&quot;, sans-serif;font-size:14px;font-weight:400;color:#252423;letter-spacing:0.250px;">data</span>
<span class="t" style="left:279.78px;top:139.65px;font-family:&quot;Liberation Sans&quot;, sans-serif;font-size:14px;font-weight:400;color:#252423;letter-spacing:-0.447px;">Excel</span>
<span class="t" style="left:263.82px;top:159.65px;font-family:&quot;Liberation Sans&quot;, sans-serif;font-size:14px;font-weight:400;color:#252423;letter-spacing:0.635px;">workbook</span>
<span class="t" style="left:336.76px;top:139.65px;font-family:&quot;Liberation Sans&quot;, sans-serif;font-size:14px;font-weight:400;color:#252423;letter-spacing:0.025px;">OneLake</span>
<span class="t" style="left:334.25px;top:159.65px;font-family:&quot;Liberation Sans&quot;, sans-serif;font-size:14px;font-weight:400;color:#252423;letter-spacing:0.263px;">catalog</span>
<span class="t" style="left:410.66px;top:139.65px;font-family:&quot;Liberation Sans&quot;, sans-serif;font-size:14px;font-weight:400;color:#252423;letter-spacing:-0.672px;">SQL</span>
<span class="t" style="left:403.58px;top:159.65px;font-family:&quot;Liberation Sans&quot;, sans-serif;font-size:14px;font-weight:400;color:#252423;letter-spacing:-0.081px;">Server</span>
<span class="t" style="left:457.95px;top:139.65px;font-family:&quot;Liberation Sans&quot;, sans-serif;font-size:14px;font-weight:400;color:#252423;letter-spacing:-0.094px;">Enter</span>
<span class="t" style="left:460.50px;top:159.65px;font-family:&quot;Liberation Sans&quot;, sans-serif;font-size:14px;font-weight:400;color:#252423;letter-spacing:0.250px;">data</span>
<span class="t" style="left:502.08px;top:139.65px;font-family:&quot;Liberation Sans&quot;, sans-serif;font-size:14px;font-weight:400;color:#252423;letter-spacing:0.104px;">Dataverse</span>
<span class="t" style="left:581.87px;top:139.65px;font-family:&quot;Liberation Sans&quot;, sans-serif;font-size:14px;font-weight:400;color:#252423;letter-spacing:-0.018px;">Recent</span>
<span class="t" style="left:571.75px;top:159.65px;font-family:&quot;Liberation Sans&quot;, sans-serif;font-size:14px;font-weight:400;color:#252423;letter-spacing:0.067px;">sources</span>
<span class="t" style="left:662.10px;top:139.65px;font-family:&quot;Liberation Sans&quot;, sans-serif;font-size:14px;font-weight:400;color:#252423;letter-spacing:0.191px;">Transform</span>
<span class="t" style="left:673.00px;top:159.65px;font-family:&quot;Liberation Sans&quot;, sans-serif;font-size:14px;font-weight:400;color:#252423;letter-spacing:0.188px;">data</span>
<span class="t" style="left:732.42px;top:139.65px;font-family:&quot;Liberation Sans&quot;, sans-serif;font-size:14px;font-weight:400;color:#252423;letter-spacing:-0.112px;">Refresh</span>
<span class="t" style="left:815.15px;top:139.65px;font-family:&quot;Liberation Sans&quot;, sans-serif;font-size:14px;font-weight:400;color:#252423;letter-spacing:0.245px;">New</span>
<span class="t" style="left:811.21px;top:159.65px;font-family:&quot;Liberation Sans&quot;, sans-serif;font-size:14px;font-weight:400;color:#252423;letter-spacing:0.117px;">visual</span>
<span class="t" style="left:866.91px;top:139.65px;font-family:&quot;Liberation Sans&quot;, sans-serif;font-size:14px;font-weight:400;color:#252423;letter-spacing:-0.172px;">Text</span>
<span class="t" style="left:867.90px;top:159.65px;font-family:&quot;Liberation Sans&quot;, sans-serif;font-size:14px;font-weight:400;color:#252423;letter-spacing:0.307px;">box</span>
<span class="t" style="left:918.96px;top:139.65px;font-family:&quot;Liberation Sans&quot;, sans-serif;font-size:14px;font-weight:400;color:#252423;letter-spacing:0.461px;">More</span>
<span class="t" style="left:906.85px;top:159.65px;font-family:&quot;Liberation Sans&quot;, sans-serif;font-size:14px;font-weight:400;color:#252423;letter-spacing:-0.042px;">visuals</span>
<span class="t" style="left:998.39px;top:139.65px;font-family:&quot;Liberation Sans&quot;, sans-serif;font-size:14px;font-weight:400;color:#c8c6c4;letter-spacing:0.280px;">New visual</span>
<span class="t" style="left:991.00px;top:159.65px;font-family:&quot;Liberation Sans&quot;, sans-serif;font-size:14px;font-weight:400;color:#c8c6c4;letter-spacing:0.349px;">calculation</span>
<span class="t" style="left:1094.58px;top:139.65px;font-family:&quot;Liberation Sans&quot;, sans-serif;font-size:14px;font-weight:400;color:#252423;letter-spacing:0.411px;">New</span>
<span class="t" style="left:1081.22px;top:159.65px;font-family:&quot;Liberation Sans&quot;, sans-serif;font-size:14px;font-weight:400;color:#252423;letter-spacing:0.183px;">measure</span>
<span class="t" style="left:1151.32px;top:139.65px;font-family:&quot;Liberation Sans&quot;, sans-serif;font-size:14px;font-weight:400;color:#252423;letter-spacing:0.391px;">Quick</span>
<span class="t" style="left:1142.11px;top:159.65px;font-family:&quot;Liberation Sans&quot;, sans-serif;font-size:14px;font-weight:400;color:#252423;letter-spacing:0.219px;">measure</span>
<span class="t" style="left:1223.85px;top:139.65px;font-family:&quot;Liberation Sans&quot;, sans-serif;font-size:14px;font-weight:400;color:#c8c6c4;letter-spacing:0.247px;">Sensitivity</span>
<span class="t" style="left:1315.58px;top:139.65px;font-family:&quot;Liberation Sans&quot;, sans-serif;font-size:14px;font-weight:400;color:#252423;letter-spacing:0.154px;">Publish</span>
<span class="t" style="left:1388.93px;top:139.65px;font-family:&quot;Liberation Sans&quot;, sans-serif;font-size:14px;font-weight:400;color:#252423;letter-spacing:0.351px;">Prep data for</span>
<span class="t" style="left:1424.94px;top:159.65px;font-family:&quot;Liberation Sans&quot;, sans-serif;font-size:14px;font-weight:400;color:#252423;letter-spacing:-0.117px;">AI</span>
<span class="t" style="left:1480.24px;top:139.65px;font-family:&quot;Liberation Sans&quot;, sans-serif;font-size:14px;font-weight:400;color:#252423;letter-spacing:0.487px;">Copilot</span>
<span class="t" style="left:73.29px;top:186.22px;font-family:&quot;Liberation Sans&quot;, sans-serif;font-size:12.5px;font-weight:400;color:#252423;letter-spacing:-0.013px;">Clipboard</span>
<span class="t" style="left:411.82px;top:186.22px;font-family:&quot;Liberation Sans&quot;, sans-serif;font-size:12.5px;font-weight:400;color:#252423;letter-spacing:-0.352px;">Data</span>
<span class="t" style="left:700.37px;top:186.22px;font-family:&quot;Liberation Sans&quot;, sans-serif;font-size:12.5px;font-weight:400;color:#252423;letter-spacing:-0.254px;">Queries</span>
<span class="t" style="left:870.69px;top:186.22px;font-family:&quot;Liberation Sans&quot;, sans-serif;font-size:12.5px;font-weight:400;color:#252423;letter-spacing:-0.128px;">Insert</span>
<span class="t" style="left:1061.31px;top:186.22px;font-family:&quot;Liberation Sans&quot;, sans-serif;font-size:12.5px;font-weight:400;color:#252423;letter-spacing:-0.174px;">Calculations</span>
<span class="t" style="left:1229.19px;top:186.22px;font-family:&quot;Liberation Sans&quot;, sans-serif;font-size:12.5px;font-weight:400;color:#252423;letter-spacing:-0.116px;">Sensitivity</span>
<span class="t" style="left:1323.26px;top:186.22px;font-family:&quot;Liberation Sans&quot;, sans-serif;font-size:12.5px;font-weight:400;color:#252423;letter-spacing:-0.472px;">Share</span>
<span class="t" style="left:1438.08px;top:186.22px;font-family:&quot;Liberation Sans&quot;, sans-serif;font-size:12.5px;font-weight:400;color:#252423;letter-spacing:0.154px;">Copilot</span>
<span class="t" style="left:298.50px;top:229.58px;font-family:&quot;DejaVu Sans&quot;, &quot;Liberation Sans&quot;, sans-serif;font-size:33px;font-weight:400;color:#fff;letter-spacing:-0.150px;-webkit-text-stroke:0.45px #fff;">Customer Churn Dashboard</span>
<span class="t" style="left:763.50px;top:235.66px;font-family:&quot;DejaVu Sans Condensed&quot;, &quot;DejaVu Sans&quot;, sans-serif;font-size:27px;font-weight:400;color:#f2f2f2;transform:scaleX(.7);transform-origin:0 50%;">|</span>
<span class="t" style="left:775.00px;top:238.32px;font-family:&quot;DejaVu Sans Condensed&quot;, &quot;DejaVu Sans&quot;, sans-serif;font-size:23.5px;font-weight:400;color:#ededed;letter-spacing:-0.612px;">Telecom Analysis</span>
<span class="t" style="left:325.00px;top:341.71px;font-family:&quot;DejaVu Sans&quot;, &quot;Liberation Sans&quot;, sans-serif;font-size:16px;font-weight:700;color:#5c5c5c;letter-spacing:0.216px;">Total Customers</span>
<span class="t" style="left:325.00px;top:364.41px;font-family:&quot;Liberation Sans&quot;, sans-serif;font-size:25.5px;font-weight:700;color:#252423;letter-spacing:-1.305px;">3K</span>
<span class="t" style="left:575.50px;top:342.71px;font-family:&quot;DejaVu Sans&quot;, &quot;Liberation Sans&quot;, sans-serif;font-size:16px;font-weight:700;color:#5c5c5c;letter-spacing:0.062px;">Avg Day Minutes</span>
<span class="t" style="left:576.25px;top:364.91px;font-family:&quot;Liberation Sans&quot;, sans-serif;font-size:25.5px;font-weight:700;color:#252423;letter-spacing:-0.333px;">179.78</span>
<span class="t" style="left:830.00px;top:341.71px;font-family:&quot;DejaVu Sans&quot;, &quot;Liberation Sans&quot;, sans-serif;font-size:16px;font-weight:700;color:#5c5c5c;letter-spacing:0.113px;">Average Charges</span>
<span class="t" style="left:830.75px;top:363.91px;font-family:&quot;Liberation Sans&quot;, sans-serif;font-size:25.5px;font-weight:700;color:#252423;letter-spacing:-0.333px;">$30.56</span>
<span class="t" style="left:1084.25px;top:341.71px;font-family:&quot;DejaVu Sans&quot;, &quot;Liberation Sans&quot;, sans-serif;font-size:16px;font-weight:700;color:#5c5c5c;letter-spacing:0.093px;">Churn Customers</span>
<span class="t" style="left:1084.25px;top:364.41px;font-family:&quot;Liberation Sans&quot;, sans-serif;font-size:25.5px;font-weight:700;color:#252423;letter-spacing:-0.516px;">483</span>
<span class="t" style="left:1337.50px;top:341.71px;font-family:&quot;DejaVu Sans&quot;, &quot;Liberation Sans&quot;, sans-serif;font-size:16px;font-weight:700;color:#5c5c5c;letter-spacing:0.409px;">Churn Rate %</span>
<span class="t" style="left:1339.25px;top:364.41px;font-family:&quot;Liberation Sans&quot;, sans-serif;font-size:25.5px;font-weight:700;color:#252423;letter-spacing:-0.833px;">14.49%</span>
<span class="t" style="left:294.50px;top:461.85px;font-family:&quot;DejaVu Sans&quot;, &quot;Liberation Sans&quot;, sans-serif;font-size:18.5px;font-weight:400;color:#252423;letter-spacing:0.156px;">Churn Distribution</span>
<span class="t" style="left:294.30px;top:495.57px;font-family:&quot;Liberation Sans&quot;, sans-serif;font-size:13.5px;font-weight:400;color:#605e5c;letter-spacing:-0.046px;">Show how many customers churned vs stayed</span>
<span class="t" style="left:312.83px;top:552.84px;font-family:&quot;Liberation Sans&quot;, sans-serif;font-size:12px;font-weight:700;color:#5a5a5a;letter-spacing:-0.172px;">2K</span>
<span class="t" style="left:312.83px;top:622.84px;font-family:&quot;Liberation Sans&quot;, sans-serif;font-size:12px;font-weight:700;color:#5a5a5a;letter-spacing:-0.172px;">0K</span>
<span class="t" style="left:263.49px;top:570.50px;font-family:&quot;Liberation Sans&quot;, sans-serif;font-size:11px;font-weight:700;color:#252423;width:74.01px;letter-spacing:-0.511px;transform:rotate(-90deg);transform-origin:50% 50%;">Count of Churn</span>
<span class="t" style="left:476.73px;top:634.84px;font-family:&quot;Liberation Sans&quot;, sans-serif;font-size:12px;font-weight:700;color:#5a5a5a;letter-spacing:-0.537px;">False</span>
<span class="t" style="left:596.39px;top:634.84px;font-family:&quot;Liberation Sans&quot;, sans-serif;font-size:12px;font-weight:700;color:#5a5a5a;letter-spacing:-0.211px;">True</span>
<span class="t" style="left:534.99px;top:652.69px;font-family:&quot;DejaVu Sans Condensed&quot;, &quot;DejaVu Sans&quot;, sans-serif;font-size:11px;font-weight:400;color:#252423;letter-spacing:-0.022px;">Churn</span>
<span class="t" style="left:790.75px;top:461.85px;font-family:&quot;DejaVu Sans&quot;, &quot;Liberation Sans&quot;, sans-serif;font-size:18.5px;font-weight:400;color:#252423;letter-spacing:-0.217px;">Churn Customers and Churn Rate % by State</span>
<span class="t" style="left:804.00px;top:501.14px;font-family:&quot;Liberation Sans&quot;, sans-serif;font-size:12px;font-weight:400;color:#605e5c;letter-spacing:-0.095px;">Churn Customers</span>
<span class="t" style="left:914.90px;top:501.14px;font-family:&quot;Liberation Sans&quot;, sans-serif;font-size:12px;font-weight:400;color:#605e5c;letter-spacing:-0.223px;">Churn Rate %</span>
<span class="t" style="left:843.03px;top:629.27px;font-family:&quot;Liberation Sans&quot;, sans-serif;font-size:12px;font-weight:700;color:#5a5a5a;width:15.34px;transform:rotate(-90deg);transform-origin:50% 50%;">NJ</span>
<span class="t" style="left:863.75px;top:629.27px;font-family:&quot;Liberation Sans&quot;, sans-serif;font-size:12px;font-weight:700;color:#5a5a5a;width:15.34px;transform:rotate(-90deg);transform-origin:50% 50%;">TX</span>
<span class="t" style="left:882.80px;top:630.94px;font-family:&quot;Liberation Sans&quot;, sans-serif;font-size:12px;font-weight:700;color:#5a5a5a;width:18.67px;transform:rotate(-90deg);transform-origin:50% 50%;">MD</span>
<span class="t" style="left:906.19px;top:628.27px;font-family:&quot;Liberation Sans&quot;, sans-serif;font-size:12px;font-weight:700;color:#5a5a5a;width:13.34px;transform:rotate(-90deg);transform-origin:50% 50%;">MI</span>
<span class="t" style="left:924.24px;top:630.94px;font-family:&quot;Liberation Sans&quot;, sans-serif;font-size:12px;font-weight:700;color:#5a5a5a;width:18.67px;transform:rotate(-90deg);transform-origin:50% 50%;">MN</span>
<span class="t" style="left:945.96px;top:629.94px;font-family:&quot;Liberation Sans&quot;, sans-serif;font-size:12px;font-weight:700;color:#5a5a5a;width:16.67px;transform:rotate(-90deg);transform-origin:50% 50%;">NY</span>
<span class="t" style="left:966.02px;top:630.60px;font-family:&quot;Liberation Sans&quot;, sans-serif;font-size:12px;font-weight:700;color:#5a5a5a;width:18.00px;transform:rotate(-90deg);transform-origin:50% 50%;">MS</span>
<span class="t" style="left:987.08px;top:630.26px;font-family:&quot;Liberation Sans&quot;, sans-serif;font-size:12px;font-weight:700;color:#5a5a5a;width:17.33px;transform:rotate(-90deg);transform-origin:50% 50%;">MT</span>
<span class="t" style="left:1008.12px;top:629.94px;font-family:&quot;Liberation Sans&quot;, sans-serif;font-size:12px;font-weight:700;color:#5a5a5a;width:16.67px;transform:rotate(-90deg);transform-origin:50% 50%;">NV</span>
<span class="t" style="left:1028.84px;top:629.94px;font-family:&quot;Liberation Sans&quot;, sans-serif;font-size:12px;font-weight:700;color:#5a5a5a;width:16.67px;transform:rotate(-90deg);transform-origin:50% 50%;">SC</span>
<span class="t" style="left:1048.23px;top:631.27px;font-family:&quot;Liberation Sans&quot;, sans-serif;font-size:12px;font-weight:700;color:#5a5a5a;width:19.34px;transform:rotate(-90deg);transform-origin:50% 50%;">WA</span>
<span class="t" style="left:1070.28px;top:629.94px;font-family:&quot;Liberation Sans&quot;, sans-serif;font-size:12px;font-weight:700;color:#5a5a5a;width:16.67px;transform:rotate(-90deg);transform-origin:50% 50%;">KS</span>
<span class="t" style="left:1090.34px;top:630.60px;font-family:&quot;Liberation Sans&quot;, sans-serif;font-size:12px;font-weight:700;color:#5a5a5a;width:18.00px;transform:rotate(-90deg);transform-origin:50% 50%;">ME</span>
<span class="t" style="left:1112.06px;top:629.60px;font-family:&quot;Liberation Sans&quot;, sans-serif;font-size:12px;font-weight:700;color:#5a5a5a;width:16.00px;transform:rotate(-90deg);transform-origin:50% 50%;">CT</span>
<span class="t" style="left:1132.11px;top:630.27px;font-family:&quot;Liberation Sans&quot;, sans-serif;font-size:12px;font-weight:700;color:#5a5a5a;width:17.34px;transform:rotate(-90deg);transform-origin:50% 50%;">AR</span>
<span class="t" style="left:1152.16px;top:630.94px;font-family:&quot;Liberation Sans&quot;, sans-serif;font-size:12px;font-weight:700;color:#5a5a5a;width:18.67px;transform:rotate(-90deg);transform-origin:50% 50%;">MA</span>
<span class="t" style="left:1173.55px;top:630.27px;font-family:&quot;Liberation Sans&quot;, sans-serif;font-size:12px;font-weight:700;color:#5a5a5a;width:17.34px;transform:rotate(-90deg);transform-origin:50% 50%;">NC</span>
<span class="t" style="left:1193.94px;top:630.60px;font-family:&quot;Liberation Sans&quot;, sans-serif;font-size:12px;font-weight:700;color:#5a5a5a;width:18.00px;transform:rotate(-90deg);transform-origin:50% 50%;">OR</span>
<span class="t" style="left:1214.66px;top:630.60px;font-family:&quot;Liberation Sans&quot;, sans-serif;font-size:12px;font-weight:700;color:#5a5a5a;width:18.00px;transform:rotate(-90deg);transform-origin:50% 50%;">OH</span>
<span class="t" style="left:1236.38px;top:629.60px;font-family:&quot;Liberation Sans&quot;, sans-serif;font-size:12px;font-weight:700;color:#5a5a5a;width:16.00px;transform:rotate(-90deg);transform-origin:50% 50%;">UT</span>
<span class="t" style="left:1255.43px;top:631.27px;font-family:&quot;Liberation Sans&quot;, sans-serif;font-size:12px;font-weight:700;color:#5a5a5a;width:19.34px;transform:rotate(-90deg);transform-origin:50% 50%;">WV</span>
<span class="t" style="left:1277.15px;top:630.27px;font-family:&quot;Liberation Sans&quot;, sans-serif;font-size:12px;font-weight:700;color:#5a5a5a;width:17.34px;transform:rotate(-90deg);transform-origin:50% 50%;">CA</span>
<span class="t" style="left:1297.54px;top:630.60px;font-family:&quot;Liberation Sans&quot;, sans-serif;font-size:12px;font-weight:700;color:#5a5a5a;width:18.00px;transform:rotate(-90deg);transform-origin:50% 50%;">CO</span>
<span class="t" style="left:1318.92px;top:629.94px;font-family:&quot;Liberation Sans&quot;, sans-serif;font-size:12px;font-weight:700;color:#5a5a5a;width:16.67px;transform:rotate(-90deg);transform-origin:50% 50%;">DE</span>
<span class="t" style="left:1341.98px;top:627.60px;font-family:&quot;Liberation Sans&quot;, sans-serif;font-size:12px;font-weight:700;color:#5a5a5a;width:12.00px;transform:rotate(-90deg);transform-origin:50% 50%;">ID</span>
<span class="t" style="left:1362.70px;top:627.60px;font-family:&quot;Liberation Sans&quot;, sans-serif;font-size:12px;font-weight:700;color:#5a5a5a;width:12.00px;transform:rotate(-90deg);transform-origin:50% 50%;">IN</span>
<span class="t" style="left:1380.75px;top:630.27px;font-family:&quot;Liberation Sans&quot;, sans-serif;font-size:12px;font-weight:700;color:#5a5a5a;width:17.34px;transform:rotate(-90deg);transform-origin:50% 50%;">NH</span>
<span class="t" style="left:1401.14px;top:630.60px;font-family:&quot;Liberation Sans&quot;, sans-serif;font-size:12px;font-weight:700;color:#5a5a5a;width:18.00px;transform:rotate(-90deg);transform-origin:50% 50%;">OK</span>
<span class="t" style="left:1421.19px;top:631.27px;font-family:&quot;Liberation Sans&quot;, sans-serif;font-size:12px;font-weight:700;color:#5a5a5a;width:19.34px;transform:rotate(-90deg);transform-origin:50% 50%;">WY</span>
<span class="t" style="left:1443.58px;top:629.60px;font-family:&quot;Liberation Sans&quot;, sans-serif;font-size:12px;font-weight:700;color:#5a5a5a;width:16.00px;transform:rotate(-90deg);transform-origin:50% 50%;">AL</span>
<span class="t" style="left:1464.96px;top:628.94px;font-family:&quot;Liberation Sans&quot;, sans-serif;font-size:12px;font-weight:700;color:#5a5a5a;width:14.67px;transform:rotate(-90deg);transform-origin:50% 50%;">FL</span>
<span class="t" style="left:1484.02px;top:630.60px;font-family:&quot;Liberation Sans&quot;, sans-serif;font-size:12px;font-weight:700;color:#5a5a5a;width:18.00px;transform:rotate(-90deg);transform-origin:50% 50%;">GA</span>
<span class="t" style="left:809.62px;top:524.04px;font-family:&quot;Liberation Sans&quot;, sans-serif;font-size:12px;font-weight:700;color:#5a5a5a;letter-spacing:0.320px;">20</span>
<span class="t" style="left:809.62px;top:569.24px;font-family:&quot;Liberation Sans&quot;, sans-serif;font-size:12px;font-weight:700;color:#5a5a5a;letter-spacing:0.320px;">10</span>
<span class="t" style="left:816.61px;top:614.14px;font-family:&quot;Liberation Sans&quot;, sans-serif;font-size:12px;font-weight:700;color:#5a5a5a;">0</span>
<span class="t" style="left:752.77px;top:569.50px;font-family:&quot;Liberation Sans&quot;, sans-serif;font-size:11px;font-weight:700;color:#252423;width:86.46px;letter-spacing:-0.460px;transform:rotate(-90deg);transform-origin:50% 50%;">Churn Customers</span>
<span class="t" style="left:1519.60px;top:553.84px;font-family:&quot;Liberation Sans&quot;, sans-serif;font-size:12px;font-weight:400;color:#605e5c;letter-spacing:-0.062px;">0.2</span>
<span class="t" style="left:1519.60px;top:614.14px;font-family:&quot;Liberation Sans&quot;, sans-serif;font-size:12px;font-weight:400;color:#605e5c;letter-spacing:-0.062px;">0.0</span>
<span class="t" style="left:1516.15px;top:569.50px;font-family:&quot;DejaVu Sans Condensed&quot;, &quot;DejaVu Sans&quot;, sans-serif;font-size:11px;font-weight:400;color:#252423;width:65.71px;letter-spacing:-0.206px;transform:rotate(-90deg);transform-origin:50% 50%;">Churn Rate %</span>
<span class="t" style="left:295.00px;top:691.93px;font-family:&quot;DejaVu Sans&quot;, &quot;Liberation Sans&quot;, sans-serif;font-size:19px;font-weight:400;color:#252423;letter-spacing:0.175px;">Churn Rate% By International plan</span>
<span class="t" style="left:294.60px;top:721.77px;font-family:&quot;Liberation Sans&quot;, sans-serif;font-size:13.5px;font-weight:400;color:#605e5c;letter-spacing:0.056px;">Understanding customer behaviour.</span>
<span class="t" style="left:313.60px;top:745.04px;font-family:&quot;Liberation Sans&quot;, sans-serif;font-size:12px;font-weight:400;color:#605e5c;letter-spacing:-0.396px;">0.2</span>
<span class="t" style="left:313.60px;top:811.14px;font-family:&quot;Liberation Sans&quot;, sans-serif;font-size:12px;font-weight:400;color:#605e5c;letter-spacing:-0.396px;">0.1</span>
<span class="t" style="left:313.60px;top:877.84px;font-family:&quot;Liberation Sans&quot;, sans-serif;font-size:12px;font-weight:400;color:#605e5c;letter-spacing:-0.396px;">0.0</span>
<span class="t" style="left:266.92px;top:811.50px;font-family:&quot;DejaVu Sans Condensed&quot;, &quot;DejaVu Sans&quot;, sans-serif;font-size:11px;font-weight:400;color:#252423;width:66.16px;letter-spacing:-0.164px;transform:rotate(-90deg);transform-origin:50% 50%;">Churn Rate %</span>
<span class="t" style="left:502.76px;top:889.84px;font-family:&quot;Liberation Sans&quot;, sans-serif;font-size:12px;font-weight:400;color:#605e5c;letter-spacing:0.328px;">No</span>
<span class="t" style="left:633.20px;top:889.84px;font-family:&quot;Liberation Sans&quot;, sans-serif;font-size:12px;font-weight:400;color:#605e5c;letter-spacing:-0.693px;">Yes</span>
<span class="t" style="left:531.68px;top:907.99px;font-family:&quot;DejaVu Sans Condensed&quot;, &quot;DejaVu Sans&quot;, sans-serif;font-size:11px;font-weight:400;color:#252423;letter-spacing:-0.134px;">By Voice mail plan</span>
<span class="t" style="left:625.00px;top:735.30px;font-family:&quot;DejaVu Sans Condensed&quot;, &quot;DejaVu Sans&quot;, sans-serif;font-size:13px;font-weight:400;color:#252423;letter-spacing:0.717px;-webkit-text-stroke:0.22px #252423;">Classify by:</span>
<span class="t" style="left:628.70px;top:766.40px;font-family:&quot;Liberation Sans&quot;, sans-serif;font-size:13px;font-weight:400;color:#555;letter-spacing:0.126px;">By Voice mail plan</span>
<span class="t" style="left:847.50px;top:690.93px;font-family:&quot;DejaVu Sans&quot;, &quot;Liberation Sans&quot;, sans-serif;font-size:19px;font-weight:400;color:#252423;letter-spacing:0.116px;">Avg charges: Churned vs Retained</span>
<span class="t" style="left:847.30px;top:720.57px;font-family:&quot;Liberation Sans&quot;, sans-serif;font-size:13.5px;font-weight:400;color:#605e5c;letter-spacing:0.014px;">Day, evening, night, intl</span>
<span class="t" style="left:860.40px;top:748.64px;font-family:&quot;Liberation Sans&quot;, sans-serif;font-size:12px;font-weight:400;color:#605e5c;letter-spacing:-0.085px;">Avg Charge Churned</span>
<span class="t" style="left:990.40px;top:748.64px;font-family:&quot;Liberation Sans&quot;, sans-serif;font-size:12px;font-weight:400;color:#605e5c;letter-spacing:-0.102px;">Avg Charge Retained</span>
<span class="t" style="left:903.15px;top:795.04px;font-family:&quot;Liberation Sans&quot;, sans-serif;font-size:12px;font-weight:400;color:#605e5c;letter-spacing:-0.248px;">Day</span>
<span class="t" style="left:881.55px;top:826.04px;font-family:&quot;Liberation Sans&quot;, sans-serif;font-size:12px;font-weight:400;color:#605e5c;letter-spacing:-0.154px;">Evening</span>
<span class="t" style="left:894.24px;top:857.04px;font-family:&quot;Liberation Sans&quot;, sans-serif;font-size:12px;font-weight:400;color:#605e5c;letter-spacing:0.437px;">Night</span>
<span class="t" style="left:855.97px;top:888.04px;font-family:&quot;Liberation Sans&quot;, sans-serif;font-size:12px;font-weight:400;color:#605e5c;letter-spacing:0.166px;">International</span>
<span class="t" style="left:1249.40px;top:691.63px;font-family:&quot;DejaVu Sans&quot;, &quot;Liberation Sans&quot;, sans-serif;font-size:19px;font-weight:400;color:#252423;letter-spacing:0.709px;">Plan combination heat map</span>
<span class="t" style="left:1249.00px;top:720.57px;font-family:&quot;Liberation Sans&quot;, sans-serif;font-size:13.5px;font-weight:400;color:#605e5c;letter-spacing:0.021px;">Churn rate % by plan pairing</span>
<span class="t" style="left:1254.40px;top:753.76px;font-family:&quot;DejaVu Sans&quot;, &quot;Liberation Sans&quot;, sans-serif;font-size:16px;font-weight:400;color:#252423;letter-spacing:0.237px;">International</span>
<span class="t" style="left:1254.40px;top:773.66px;font-family:&quot;DejaVu Sans&quot;, &quot;Liberation Sans&quot;, sans-serif;font-size:16px;font-weight:400;color:#252423;letter-spacing:-0.137px;">plan</span>
<span class="t" style="left:1387.70px;top:753.76px;font-family:&quot;DejaVu Sans&quot;, &quot;Liberation Sans&quot;, sans-serif;font-size:16px;font-weight:400;color:#252423;letter-spacing:-0.133px;">No</span>
<span class="t" style="left:1473.40px;top:753.76px;font-family:&quot;DejaVu Sans&quot;, &quot;Liberation Sans&quot;, sans-serif;font-size:16px;font-weight:400;color:#252423;letter-spacing:0.557px;">Yes</span>
<span class="t" style="left:1254.40px;top:824.96px;font-family:&quot;DejaVu Sans&quot;, &quot;Liberation Sans&quot;, sans-serif;font-size:16px;font-weight:400;color:#252423;letter-spacing:0.617px;">No</span>
<span class="t" style="left:1254.40px;top:876.96px;font-family:&quot;DejaVu Sans&quot;, &quot;Liberation Sans&quot;, sans-serif;font-size:16px;font-weight:400;color:#252423;letter-spacing:1.224px;">Yes</span>
<span class="t" style="left:1388.91px;top:826.80px;font-family:&quot;Liberation Sans&quot;, sans-serif;font-size:21.5px;font-weight:700;color:#252423;letter-spacing:0.013px;">13.85%</span>
<span class="t" style="left:1486.61px;top:826.80px;font-family:&quot;Liberation Sans&quot;, sans-serif;font-size:21.5px;font-weight:700;color:#252423;letter-spacing:0.006px;">5.30%</span>
<span class="t" style="left:1388.50px;top:878.30px;font-family:&quot;Liberation Sans&quot;, sans-serif;font-size:21.5px;font-weight:700;color:#252423;letter-spacing:0.096px;">43.72%</span>
<span class="t" style="left:1474.20px;top:878.30px;font-family:&quot;Liberation Sans&quot;, sans-serif;font-size:21.5px;font-weight:700;color:#252423;letter-spacing:0.096px;">39.13%</span>
<span class="t" style="left:235.25px;top:961.03px;font-family:&quot;Liberation Sans&quot;, sans-serif;font-size:14.5px;font-weight:400;color:#252423;letter-spacing:-0.495px;">Page 1</span>
<span class="t" style="left:5.00px;top:999.65px;font-family:&quot;Liberation Sans&quot;, sans-serif;font-size:14px;font-weight:400;color:#3b3a39;letter-spacing:0.170px;">Page 1 of 1</span>
<span class="t" style="left:1655.50px;top:998.15px;font-family:&quot;Liberation Sans&quot;, sans-serif;font-size:14px;font-weight:400;color:#3b3a39;">-</span>
<span class="t" style="left:1825.00px;top:998.57px;font-family:&quot;Liberation Sans&quot;, sans-serif;font-size:13.5px;font-weight:400;color:#3b3a39;letter-spacing:0.656px;">82%</span>
<span class="t" style="left:1787.40px;top:294.45px;font-family:&quot;Liberation Sans&quot;, sans-serif;font-size:18.5px;font-weight:400;color:#252423;width:52.20px;letter-spacing:0.304px;transform:rotate(90deg);transform-origin:50% 50%;-webkit-text-stroke:0.35px #252423;">Filters</span>
<span class="t" style="left:1791.36px;top:303.25px;font-family:&quot;Liberation Sans&quot;, sans-serif;font-size:18.5px;font-weight:400;color:#252423;width:122.27px;letter-spacing:0.730px;transform:rotate(90deg);transform-origin:50% 50%;-webkit-text-stroke:0.35px #252423;">Visualizations</span>
<span class="t" style="left:1877.99px;top:262.75px;font-family:&quot;Liberation Sans&quot;, sans-serif;font-size:18.5px;font-weight:400;color:#252423;width:39.02px;letter-spacing:-0.020px;transform:rotate(90deg);transform-origin:50% 50%;-webkit-text-stroke:0.35px #252423;">Data</span>
<span class="t" style="left:12.50px;top:376.80px;font-family:&quot;Liberation Sans&quot;, sans-serif;font-size:8.5px;font-weight:700;color:#605e5c;letter-spacing:0.016px;">DAX</span>
<span class="t" style="left:13.50px;top:426.30px;font-family:&quot;Liberation Sans&quot;, sans-serif;font-size:8.5px;font-weight:700;color:#605e5c;letter-spacing:-0.027px;">TMDL</span>
<span class="t" style="left:301.99px;top:117.30px;font-family:&quot;Liberation Sans&quot;, sans-serif;font-size:15px;font-weight:700;color:#fff;">X</span>
<span class="t" style="left:871.66px;top:100.74px;font-family:&quot;Liberation Sans&quot;, sans-serif;font-size:25px;font-weight:400;color:#3b93e0;">A</span>
<span class="t" style="left:1035.00px;top:111.17px;font-family:&quot;Liberation Serif&quot;, serif;font-size:20px;font-weight:400;color:#bab8b6;font-style:italic;">fx</span>
<span class="t" style="left:839.40px;top:891.76px;font-family:&quot;DejaVu Sans&quot;, &quot;Liberation Sans&quot;, sans-serif;font-size:66px;font-weight:700;color:#464646;transform:scaleY(1.1);transform-origin:50% 50%;pointer-events:none;opacity:.135;">مستقل</span>
<span class="t" style="left:843.50px;top:959.68px;font-family:&quot;Liberation Sans&quot;, sans-serif;font-size:37px;font-weight:700;color:#464646;letter-spacing:0.253px;pointer-events:none;opacity:.135;">mostaql.com</span>
</body></html>
